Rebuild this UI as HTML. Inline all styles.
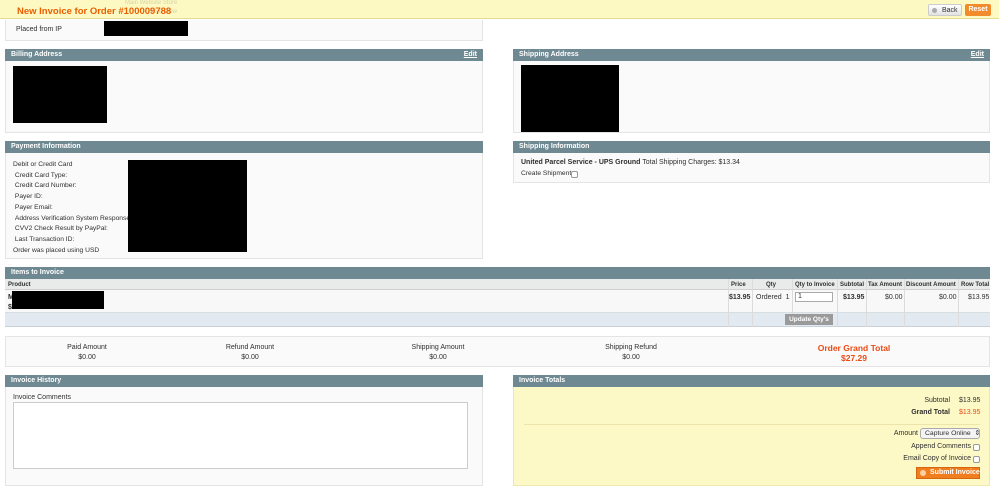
<!DOCTYPE html><html><head><style>
*{margin:0;padding:0;box-sizing:border-box}
body{width:999px;height:503px;background:#fff;font-family:"Liberation Sans",Arial,sans-serif;font-size:7px;color:#2f2f2f;position:relative;overflow:hidden}
.a{position:absolute}
.h{position:absolute;background:#6f8992;color:#fff;font-weight:bold;font-size:7px;line-height:12px;padding-left:6px;height:12px}
.h span{position:absolute;right:6px;text-decoration:underline}
.b{position:absolute;background:#fafafa;border:1px solid #e4e4e4;border-top:none}
.k{position:absolute;background:#000}
.t{position:absolute;white-space:nowrap;margin-top:2px}
.r{position:absolute;white-space:nowrap;margin-top:2px;text-align:right}
.c{position:absolute;text-align:center;white-space:nowrap;line-height:10px;margin-top:1px}
.cb{position:absolute;width:7px;height:7px;border:1px solid #999;border-radius:2px;background:#fff}
</style></head><body>
<div class="a" style="left:0;top:0;width:999px;height:19px;background:#fdf9c2;border-bottom:1px solid #e8dd8c"></div>
<div class="t" style="left:125px;top:-2px;color:#d8d3a8;font-size:6px">Main Website Store</div>
<div class="t" style="left:148px;top:7px;color:#d8d3a8;font-size:6px">Store View</div>
<div class="t" style="left:17px;top:4px;color:#eb5e00;font-weight:bold;font-size:9.5px">New Invoice for Order #100009788</div>
<div class="a" style="left:928px;top:4px;width:34px;height:12px;background:linear-gradient(#fff,#e2e2e2);border:1px solid #ccc;border-radius:2px;font-size:7px;line-height:11px;padding-left:13px;color:#333">Back</div>
<div class="a" style="left:932px;top:8px;width:5px;height:5px;border-radius:50%;background:#aaa"></div>
<div class="a" style="left:965px;top:4px;width:26px;height:12px;background:#f18b2c;color:#fff;font-weight:bold;font-size:7px;line-height:12px;text-align:center;border-radius:2px">Reset</div>

<div class="b" style="left:5px;top:20px;width:478px;height:21px"></div>
<div class="t" style="left:16px;top:24px">Placed from IP</div>
<div class="k" style="left:104px;top:21px;width:84px;height:15px"></div>

<div class="h" style="left:5px;top:49px;width:478px">Billing Address<span>Edit</span></div>
<div class="b" style="left:5px;top:61px;width:478px;height:72px"></div>
<div class="k" style="left:13px;top:66px;width:94px;height:57px"></div>
<div class="h" style="left:513px;top:49px;width:477px">Shipping Address<span>Edit</span></div>
<div class="b" style="left:513px;top:61px;width:477px;height:72px"></div>
<div class="k" style="left:521px;top:65px;width:98px;height:67px"></div>

<div class="h" style="left:5px;top:141px;width:478px">Payment Information</div>
<div class="b" style="left:5px;top:153px;width:478px;height:106px"></div>
<div class="t" style="left:13px;top:158px;line-height:10.7px;font-size:6.7px">Debit or Credit Card<br>&nbsp;Credit Card Type:<br>&nbsp;Credit Card Number:<br>&nbsp;Payer ID:<br>&nbsp;Payer Email:<br>&nbsp;Address Verification System Response:<br>&nbsp;CVV2 Check Result by PayPal:<br>&nbsp;Last Transaction ID:<br>Order was placed using USD</div>
<div class="k" style="left:128px;top:160px;width:119px;height:92px"></div>
<div class="h" style="left:513px;top:141px;width:477px">Shipping Information</div>
<div class="b" style="left:513px;top:153px;width:477px;height:30px"></div>
<div class="t" style="left:521px;top:157px"><b>United Parcel Service - UPS Ground</b> Total Shipping Charges: $13.34</div>
<div class="t" style="left:521px;top:168px;font-size:6.7px">Create Shipment</div>
<div class="cb" style="left:571px;top:171px"></div>

<div class="h" style="left:5px;top:267px;width:985px">Items to Invoice</div>
<div class="a" style="left:5px;top:279px;width:985px;height:11px;background:#e9ebeb;border-bottom:1px solid #d0d0d0"></div>
<div class="a" style="left:5px;top:290px;width:985px;height:23px;background:#f8f8f8;border-bottom:1px solid #d8dde0"></div>
<div class="a" style="left:5px;top:313px;width:985px;height:14px;background:#e3e9f0;border-bottom:1px solid #c8d0d8"></div>
<div class="t" style="left:8px;top:280px;font-weight:bold;font-size:6px">Product</div>
<div class="t" style="left:731px;top:280px;font-weight:bold;font-size:6px">Price</div>
<div class="t" style="left:766px;top:280px;font-weight:bold;font-size:6px">Qty</div>
<div class="t" style="left:795px;top:280px;font-weight:bold;font-size:6px">Qty to Invoice</div>
<div class="t" style="left:840px;top:280px;font-weight:bold;font-size:6px">Subtotal</div>
<div class="t" style="left:868px;top:280px;font-weight:bold;font-size:6px">Tax Amount</div>
<div class="t" style="left:906px;top:280px;font-weight:bold;font-size:6px">Discount Amount</div>
<div class="t" style="left:961px;top:280px;font-weight:bold;font-size:6px">Row Total</div>
<div class="t" style="left:8px;top:291px;font-weight:bold;line-height:10px">M<br>$</div>
<div class="k" style="left:12px;top:291px;width:92px;height:18px"></div>
<div class="t" style="left:729px;top:292px;font-weight:bold">$13.95</div>
<div class="t" style="left:756px;top:292px">Ordered&nbsp; 1</div>
<div class="a" style="left:795px;top:292px;width:38px;height:10px;background:#fff;border:1px solid #aaa;font-size:7px;padding-left:2px;line-height:8px">1</div>
<div class="t" style="left:843px;top:292px;font-weight:bold">$13.95</div>
<div class="t" style="left:885px;top:292px">$0.00</div>
<div class="t" style="left:939px;top:292px">$0.00</div>
<div class="t" style="left:968px;top:292px">$13.95</div>
<div class="a" style="left:728px;top:279px;width:1px;height:48px;background:#dcdcdc"></div>
<div class="a" style="left:752px;top:279px;width:1px;height:48px;background:#dcdcdc"></div>
<div class="a" style="left:792px;top:279px;width:1px;height:48px;background:#dcdcdc"></div>
<div class="a" style="left:837px;top:279px;width:1px;height:48px;background:#dcdcdc"></div>
<div class="a" style="left:866px;top:279px;width:1px;height:48px;background:#dcdcdc"></div>
<div class="a" style="left:904px;top:279px;width:1px;height:48px;background:#dcdcdc"></div>
<div class="a" style="left:958px;top:279px;width:1px;height:48px;background:#dcdcdc"></div>
<div class="a" style="left:785px;top:314px;width:48px;height:11px;background:#9a9a9a;color:#fff;font-weight:bold;font-size:6.5px;line-height:11px;text-align:center">Update Qty's</div>

<div class="a" style="left:5px;top:336px;width:985px;height:31px;background:#fafafa;border:1px solid #e4e4e4"></div>
<div class="c" style="left:47px;top:342px;width:80px">Paid Amount<br>$0.00</div>
<div class="c" style="left:210px;top:342px;width:80px">Refund Amount<br>$0.00</div>
<div class="c" style="left:398px;top:342px;width:80px">Shipping Amount<br>$0.00</div>
<div class="c" style="left:591px;top:342px;width:80px">Shipping Refund<br>$0.00</div>
<div class="c" style="left:804px;top:342px;width:100px;color:#eb4a14;font-weight:bold;font-size:8.5px">Order Grand Total<br>$27.29</div>

<div class="h" style="left:5px;top:375px;width:478px">Invoice History</div>
<div class="b" style="left:5px;top:387px;width:478px;height:99px"></div>
<div class="t" style="left:13px;top:392px">Invoice Comments</div>
<div class="a" style="left:13px;top:402px;width:455px;height:67px;background:#fff;border:1px solid #ccc"></div>

<div class="h" style="left:513px;top:375px;width:477px">Invoice Totals</div>
<div class="a" style="left:513px;top:387px;width:477px;height:99px;background:#fdf9c7;border:1px solid #eee8b0;border-top:none"></div>
<div class="r" style="right:49px;top:395px">Subtotal</div>
<div class="t" style="left:959px;top:395px">$13.95</div>
<div class="r" style="right:49px;top:407px;font-weight:bold">Grand Total</div>
<div class="t" style="left:959px;top:407px;color:#eb4a14">$13.95</div>
<div class="a" style="left:524px;top:424px;width:456px;height:1px;background:#ece4a8"></div>
<div class="r" style="right:81px;top:428px">Amount</div>
<div class="a" style="left:920px;top:428px;width:60px;height:11px;background:#f4f4f4;border:1px solid #aaa;border-radius:3px;font-size:6.8px;line-height:9px;padding-left:4px;white-space:nowrap">Capture Online&nbsp; ⇕</div>
<div class="r" style="right:28px;top:441px">Append Comments</div>
<div class="cb" style="left:973px;top:444px"></div>
<div class="r" style="right:28px;top:453px">Email Copy of Invoice</div>
<div class="cb" style="left:973px;top:456px"></div>
<div class="a" style="left:916px;top:467px;width:64px;height:12px;background:#f07d1e;border:1px solid #d5660e;color:#fff;font-weight:bold;font-size:7px;line-height:10px;padding-left:13px;white-space:nowrap">Submit Invoice</div>
<div class="a" style="left:920px;top:470px;width:6px;height:6px;border-radius:50%;background:#fbd1a4"></div>
</body></html>
